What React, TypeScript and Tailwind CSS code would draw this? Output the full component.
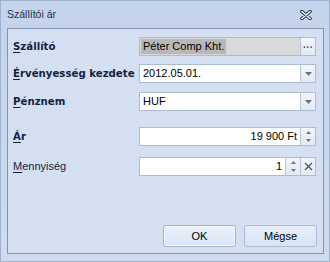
import { type ReactNode } from "react";

const Label = ({ first, rest, bold = true }: { first: string; rest: string; bold?: boolean }) => (
  <span
    className={
      bold
        ? "w-[126px] shrink-0 font-['DejaVu_Sans',sans-serif] text-[10.2px] font-bold text-[#13233f]"
        : "w-[126px] shrink-0 font-['Liberation_Sans',Arial,sans-serif] text-[11px] text-[#13233f]"
    }
  >
    <span className="underline underline-offset-2">{first}</span>
    {rest}
  </span>
);

const SideButton = ({ children }: { children: ReactNode }) => (
  <div className="w-[15px] h-full flex justify-center items-center border-l border-[#b6c4d8] bg-gradient-to-b from-[#f3f6fb] to-[#e2e9f4]">
    {children}
  </div>
);

const Arrow = () => (
  <svg width="7" height="4" viewBox="0 0 7 4">
    <path d="M0 0H7L3.5 4Z" fill="#6b7280" />
  </svg>
);

const Spin = () => (
  <svg width="5" height="11" viewBox="0 0 5 11">
    <path d="M0 3H5L2.5 0Z" fill="#6b7280" />
    <path d="M0 8H5L2.5 11Z" fill="#6b7280" />
  </svg>
);

const Cross = () => (
  <svg width="9" height="9" viewBox="0 0 9 9">
    <path d="M1 1L8 8M8 1L1 8" stroke="#4b5563" strokeWidth="1.3" />
  </svg>
);

const Field = ({ children }: { children: ReactNode }) => (
  <div className="w-[177px] h-[19px] flex border border-[#abbbd2] bg-white font-['Liberation_Sans',Arial,sans-serif] text-[11px] text-black">
    {children}
  </div>
);

const App = () => {
  return (
    <div className="w-[330px] h-[262px] flex flex-col border border-[#9fb2cd] bg-gradient-to-b from-[#c4d4eb] to-[#cfdcef]">
      {/* Title bar */}
      <div className="h-[27px] shrink-0 flex justify-between items-center pl-[6px] pr-[17px]">
        <span className="font-['Liberation_Sans',Arial,sans-serif] text-[10.5px] text-[#1e2f4b]">Szállítói ár</span>
        <svg width="12" height="10" viewBox="0 0 12 10">
          <path d="M2 1.5L10 8.5M10 1.5L2 8.5" stroke="#2b3a52" strokeWidth="3.6" strokeLinecap="round" />
          <path d="M2 1.5L10 8.5M10 1.5L2 8.5" stroke="#f4f7fb" strokeWidth="1.6" strokeLinecap="round" />
        </svg>
      </div>

      {/* Client area */}
      <div className="flex-1 ml-[6px] mr-[5px] mb-[7px] flex flex-col border border-[#8296b3] bg-[#d4e0f1] pl-[5px] pr-[6px] pt-[8px] pb-[6px]">
        <div className="flex items-center">
          <Label first="S" rest="zállító" />
          <Field>
            <div className="flex-1 flex items-center bg-[#d9d9d9] pl-px">
              <span className="bg-[#b8b8b8] px-[2px] leading-[15px]">Péter Comp Kht.</span>
            </div>
            <SideButton>
              <span className="text-[#4b5563] text-[10px] font-bold leading-none tracking-[0.5px] -mt-[3px]">...</span>
            </SideButton>
          </Field>
        </div>

        <div className="flex items-center mt-[8px]">
          <Label first="É" rest="rvényesség kezdete" />
          <Field>
            <div className="flex-1 flex items-center pl-[3px]">2012.05.01.</div>
            <SideButton>
              <Arrow />
            </SideButton>
          </Field>
        </div>

        <div className="flex items-center mt-[9px]">
          <Label first="P" rest="énznem" />
          <Field>
            <div className="flex-1 flex items-center pl-[3px]">HUF</div>
            <SideButton>
              <Arrow />
            </SideButton>
          </Field>
        </div>

        <div className="flex items-center mt-[16px]">
          <Label first="Á" rest="r" />
          <Field>
            <div className="flex-1 flex items-center justify-end pr-[3px]">19 900 Ft</div>
            <SideButton>
              <Spin />
            </SideButton>
          </Field>
        </div>

        <div className="flex items-center mt-[11px]">
          <Label first="M" rest="ennyiség" bold={false} />
          <Field>
            <div className="flex-1 flex items-center justify-end pr-[3px]">1</div>
            <SideButton>
              <Spin />
            </SideButton>
            <SideButton>
              <Cross />
            </SideButton>
          </Field>
        </div>

        <div className="flex-1" />

        <div className="flex justify-end gap-[8px] font-['Liberation_Sans',Arial,sans-serif] text-[11px] text-black">
          <button className="w-[73px] h-[22px] rounded-[3px] border border-[#9fb3cf] bg-gradient-to-b from-[#eaf1fa] to-[#d9e5f5] shadow-[inset_0_0_0_1px_#f5f8fc]">
            OK
          </button>
          <button className="w-[73px] h-[22px] rounded-[3px] border border-[#a9bbd5] bg-gradient-to-b from-[#e6eef9] to-[#d8e4f4]">
            Mégse
          </button>
        </div>
      </div>
    </div>
  );
};

export default App;
